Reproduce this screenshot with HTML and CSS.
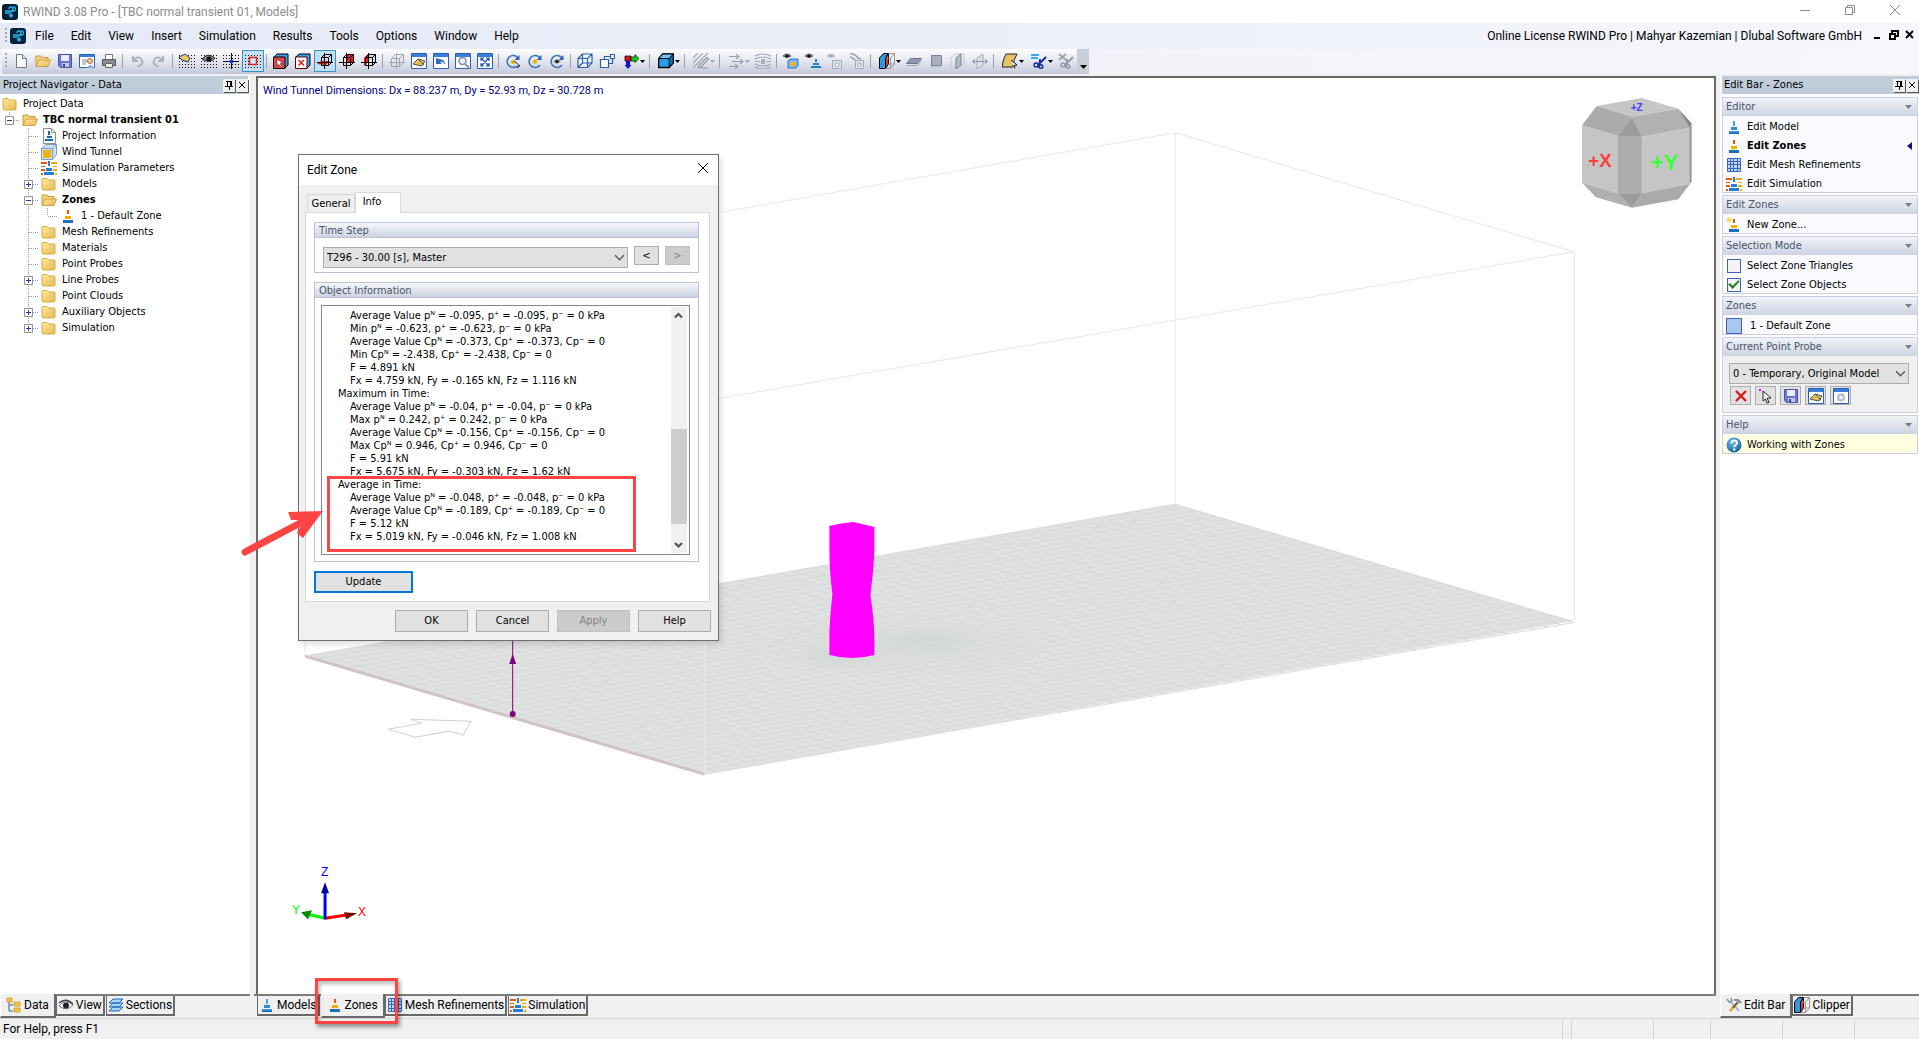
FILE: index.html
```html
<!DOCTYPE html>
<html lang="en">
<head>
<meta charset="utf-8">
<title>RWIND 3.08 Pro - [TBC normal transient 01, Models]</title>
<link rel="stylesheet" href="styles.css">
</head>
<body>
<svg class="defs" aria-hidden="true">
  <defs>
    <linearGradient id="g-folder" x1="0" y1="0" x2="1" y2="1"><stop offset="0" stop-color="#fde9a8"/><stop offset="1" stop-color="#e6b84c"/></linearGradient>
    <linearGradient id="g-blue" x1="0" y1="0" x2="0" y2="1"><stop offset="0" stop-color="#4aa3e6"/><stop offset="1" stop-color="#0f5fa8"/></linearGradient>
    <radialGradient id="g-help" cx=".4" cy=".3" r=".8"><stop offset="0" stop-color="#6cc0ee"/><stop offset="1" stop-color="#0a5b93"/></radialGradient>
    <radialGradient id="g-dense"><stop offset="0" stop-color="#ccd1d2"/><stop offset="1" stop-color="#ccd1d2" stop-opacity="0"/></radialGradient>
  </defs>
  <symbol id="i-logo" viewBox="0 0 16 16"><rect width="16" height="16" rx="3" fill="#06213a"/><path d="M3 7h6a2 2 0 1 0-2-2M3 9h5M11 3a2 2 0 1 1 1 4H9v2" fill="none" stroke="#22b5e8" stroke-width="1.3"/><circle cx="9" cy="11.500" r="2" fill="#22b5e8"/></symbol>
  <symbol id="i-folder" viewBox="0 0 16 16"><path d="M1 3.500q0-1 1-1h4l1.500 1.500H13q1 0 1 1V13q0 1-1 1H2q-1 0-1-1z" fill="url(#g-folder)" stroke="#d9ab45"/></symbol>
  <symbol id="i-open" viewBox="0 0 16 16"><path d="M1 13V3h5l1 1.500h6V7" fill="#f5d27c" stroke="#c99a35"/><path d="M1 13.500L4 7h11.500L13 13.500z" fill="url(#g-folder)" stroke="#d0a040"/></symbol>
  <symbol id="i-model" viewBox="0 0 16 16"><path d="M7 2h2v5H7z" fill="#4aa3e6"/><path d="M5 8h6v3H5z" fill="#2f8bd6"/><path d="M3 12h10v3H3z" fill="url(#g-blue)"/></symbol>
  <symbol id="i-zone" viewBox="0 0 16 16"><path d="M7 2h2v4H7z" fill="#e8590c"/><path d="M5 8h6v3H5z" fill="#f0b000"/><path d="M3 12h10v3H3z" fill="#1c6fb8"/></symbol>
  <symbol id="i-newzone" viewBox="0 0 16 16"><path d="M7 2h2v4H7z" fill="#e8590c"/><path d="M5 8h6v3H5z" fill="#f0b000"/><path d="M3 12h10v3H3z" fill="#1c6fb8"/><path d="M3 0v6M0 3h6M1 1l4 4M5 1L1 5" stroke="#f6d23c"/></symbol>
  <symbol id="i-param" viewBox="0 0 16 16"><path d="M0 2h6v2H0zM0 6h4v1H0zM0 9h4v2H0zM0 13h2v2H0z" fill="#e8590c"/><path d="M10 2h6v2h-6zM12 6h4v1h-4zM12 9h4v2h-4zM14 13h2v2h-2z" fill="#f0a800"/><path d="M7 1h2v5H7zM5 8h6v3H5zM3 12h10v3H3z" fill="#2380d0"/></symbol>
  <symbol id="i-info" viewBox="0 0 16 16"><path d="M2.500.5h8l4 4v11h-12z" fill="#fff" stroke="#8a8f96"/><path d="M10.500.5v4h4" fill="none" stroke="#8a8f96"/><path d="M7 3h2v4H7zM6 8h5v2H6zM4 11h8v2H4z" fill="#1668b0"/></symbol>
  <symbol id="i-tunnel" viewBox="0 0 16 16"><path d="M.5 4.500l4-4h11v10l-4 5H.5z" fill="#cfe0f2" stroke="#7e9cc0"/><path d="M.5 4.500h11v11M11.500 4.500l4-4" fill="none" stroke="#7e9cc0"/><path d="M2 6h8v8H2z" fill="#e9b514"/></symbol>
  <symbol id="i-mesh" viewBox="0 0 16 16"><path d="M1.500 1.500h13v13h-13z" fill="#c4d6f4"/><path d="M1.500 1.500h13v13h-13zM4.500 2v12M7.500 2v12M11.500 2v12M2 4.500h12M2 7.500h12M2 11.500h12" fill="none" stroke="#3566c0"/></symbol>
  <symbol id="i-data" viewBox="0 0 16 16"><path d="M3 5v9h4M3 8h4" fill="none" stroke="#2a66b0"/><path d="M1 1h5v4H1zM8 5h6v4H8zM8 11h6v4H8z" fill="#efc24a" stroke="#d9a830"/></symbol>
  <symbol id="i-eye" viewBox="0 0 16 16"><path d="M1 9q6-8 14-1-6 7-14 1z" fill="#fff" stroke="#777"/><path d="M1 6q7-6 14 1" fill="none" stroke="#444" stroke-width="1.500"/><circle cx="8" cy="8.500" r="3" fill="#222"/></symbol>
  <symbol id="i-sections" viewBox="0 0 16 16"><path d="M1 14l4-4h10l-4 4zM1 10l4-4h10l-4 4zM1 6l4-4h10l-4 4z" fill="#a8d2f6" stroke="#1f68b8"/></symbol>
  <symbol id="i-tools" viewBox="0 0 16 16"><path d="M4 4l9 10" stroke="#a8b8c8" stroke-width="2"/><path d="M1 2l2 3 3-1-1-3" fill="none" stroke="#8498ac" stroke-width="1.500"/><path d="M12 5l-8 9" stroke="#8a5a20" stroke-width="2"/><path d="M4 14l3-3" stroke="#f0b040" stroke-width="2"/><path d="M8 3h4l3 3" stroke="#7f90a0" stroke-width="2" fill="none"/></symbol>
  <symbol id="i-clip" viewBox="0 0 16 16"><path d="M.5 5l4-4.500h5L6.500 5v10.500h-6z" fill="#2a9be0" stroke="#000"/><path d="M6.500 5l3-4.500V11l-3 4.500z" fill="#f03030" stroke="#000"/><path d="M9.500.5h6V11l-4 4.500h-5M15.500.5l-4 4.500v10.500M11.500 5h-4M9.500 11h6" fill="none" stroke="#999"/></symbol>
  <symbol id="i-help" viewBox="0 0 16 16"><circle cx="8" cy="8" r="7.500" fill="url(#g-help)"/><path d="M5.500 6.500q0-3 2.700-3T11 6q0 1.500-1.500 2.200Q8.300 9 8.300 10.200" fill="none" stroke="#fff" stroke-width="1.800"/><circle cx="8.300" cy="12.500" r="1.200" fill="#fff"/></symbol>
  <symbol id="i-pin" viewBox="0 0 12 12"><path d="M3 2.500h6M4.500 2v5M7.500 2v5M8.500 2v5M2 7.500h8M6.500 8v3" stroke="#000" fill="none"/></symbol>
  <symbol id="i-x" viewBox="0 0 12 12"><path d="M3 3l6 6M9 3L3 9" stroke="#000" fill="none"/></symbol>
  <symbol id="i-tri" viewBox="0 0 7 4"><path d="M0 0h7L3.500 4z" fill="currentColor"/></symbol>
  <symbol id="i-chev" viewBox="0 0 10 10"><path d="M1 3l4 4 4-4" fill="none" stroke="#555" stroke-width="1.200"/></symbol>

  <symbol id="i-new" viewBox="0 0 16 16"><path d="M3.500 1.500h6l4 4v9h-10z" fill="#fff" stroke="#6b7a90"/><path d="M9.500 1.500v4h4" fill="#dde6f2" stroke="#6b7a90"/></symbol>
  <symbol id="i-save" viewBox="0 0 16 16"><path d="M1.500 1.500h13v13h-11l-2-2z" fill="#6a76d4" stroke="#4a54b0"/><path d="M4 2h8v6H4z" fill="#e8ecf8"/><path d="M5 10h7v4H5z" fill="#c0c8e0"/><path d="M6 11h2v3H6z" fill="#3a468c"/></symbol>
  <symbol id="i-report" viewBox="0 0 16 16"><path d="M.5 1.500h15v13H.5z" fill="#fff" stroke="#2a66b0"/><path d="M1 2h14v2H1z" fill="#3b7dd8"/><path d="M3 7h5M3 9h5M3 11h4" stroke="#88a"/><circle cx="11" cy="8" r="2.500" fill="#f0c8a0" stroke="#a06830"/><path d="M8 15q3-6 7 0z" fill="#8aa8d8"/></symbol>
  <symbol id="i-print" viewBox="0 0 16 16"><path d="M4.500 1.500h7v5h-7z" fill="#fff" stroke="#777"/><path d="M1.500 6.500h13v6h-13z" fill="#8a8a90" stroke="#55555c"/><path d="M4.500 10.500h7v4h-7z" fill="#eee" stroke="#666"/></symbol>
  <symbol id="i-undo" viewBox="0 0 16 16"><path d="M4 3v5h5M4.500 7.500q5-6 8-1t-4 7" fill="none" stroke="#adb3bf" stroke-width="2.200"/></symbol>
  <symbol id="i-redo" viewBox="0 0 16 16"><path d="M12 3v5H7M11.500 7.500q-5-6-8-1t4 7" fill="none" stroke="#adb3bf" stroke-width="2"/></symbol>
  <symbol id="i-dots" viewBox="0 0 16 16"><path d="M0 2.500h16M0 5.500h16M0 8.500h16M0 11.500h16M0 14.500h16" stroke="#111" stroke-dasharray="1 2"/></symbol>
  <symbol id="i-dotsedit" viewBox="0 0 16 16"><use href="#i-dots"/><path d="M0 4l6-3 5 4-2 4-6-2z" fill="#e8c860" stroke="#1c3c90"/></symbol>
  <symbol id="i-dotseye" viewBox="0 0 16 16"><use href="#i-dots"/><path d="M1 6q6-7 13-1-5 6-13 1z" fill="#889" stroke="#222"/><circle cx="8" cy="6" r="2.500" fill="#111"/></symbol>
  <symbol id="i-dotscross" viewBox="0 0 16 16"><use href="#i-dots"/><path d="M8.500 0v16M0 8.500h16" stroke="#000"/><circle cx="8.500" cy="8.500" r="2" fill="#1030e0"/></symbol>
  <symbol id="i-dotsbox" viewBox="0 0 16 16"><use href="#i-dots"/><path d="M4.500 4.500h7v7h-7z" fill="#d4ecf8" stroke="#e02020" stroke-width="1.500"/></symbol>
  <symbol id="i-boxsel" viewBox="0 0 16 16"><path d="M1 4l3-3h11v11l-3 3" fill="#38a0e8" stroke="#000"/><path d="M.5 4h11.500v11.500H.5z" fill="#f04040" stroke="#000"/><path d="M4 6l6 4-3 .5 2 3-1 1-2-3-2 1.500z" fill="#fff" stroke="#333" stroke-width=".7"/></symbol>
  <symbol id="i-boxx" viewBox="0 0 16 16"><path d="M1 4l3-3h11v11l-3 3" fill="#38a0e8" stroke="#000"/><path d="M.5 4h11.500v11.500H.5z" fill="#fff" stroke="#600"/><path d="M3.500 7l5.500 5.500M9 7l-5.500 5.500" stroke="#e02020" stroke-width="1.500"/></symbol>
  <symbol id="i-axis1" viewBox="0 0 16 16"><path d="M4 5h8v7H4z" fill="#bfe0f8"/><path d="M0 11l4-3h9l-4 4z" fill="#f01818"/><path d="M4.500 4.500l3-3h7v8l-3 3M4.500 4.500h7v8h-7zM11.500 4.500l3-3M0 9.500h16M7.500 0v16" fill="none" stroke="#000"/></symbol>
  <symbol id="i-axis2" viewBox="0 0 16 16"><path d="M7 1h7v8H7z" fill="#f01818"/><path d="M4.500 4.500l3-3h7v8l-3 3M4.500 4.500h7v8h-7zM11.500 4.500l3-3M0 9.500h16M7.500 0v16" fill="none" stroke="#000"/></symbol>
  <symbol id="i-axis3" viewBox="0 0 16 16"><path d="M7 2h7v8H7z" fill="#bfe0f8"/><path d="M3 5l4-4v8l-4 4z" fill="#f01818"/><path d="M4.500 4.500l3-3h7v8l-3 3M4.500 4.500h7v8h-7zM11.500 4.500l3-3M0 9.500h16M7.500 0v16" fill="none" stroke="#000"/></symbol>
  <symbol id="i-axisg" viewBox="0 0 16 16"><path d="M2.500 5.500l4-4h8v8l-4 4M2.500 5.500h8v8h-8zM10.500 5.500l4-4M0 9.500h16M7.500 0v16" fill="none" stroke="#a0a6b4"/></symbol>
  <symbol id="i-win" viewBox="0 0 16 16"><path d="M.5.5h15v15H.5z" fill="#fff" stroke="#2a5fb8"/><path d="M1 1h14v3H1z" fill="#3b7dd8"/></symbol>
  <symbol id="i-winedit" viewBox="0 0 16 16"><use href="#i-win"/><path d="M2 11l5-5 7 2-3 5-5-1z" fill="#e4c04c" stroke="#555"/><path d="M7 6l6 6" stroke="#2a5fb8"/></symbol>
  <symbol id="i-winback" viewBox="0 0 16 16"><use href="#i-win"/><path d="M3 5v6h6L7 9q3-1 5 3 0-6-6-6z" fill="#2a6fd0"/></symbol>
  <symbol id="i-winzoom" viewBox="0 0 16 16"><use href="#i-win"/><circle cx="7.500" cy="8" r="3.500" fill="#eef" stroke="#8090a8" stroke-width="1.500"/><path d="M10 11l4 3.500" stroke="#8090a8" stroke-width="2"/></symbol>
  <symbol id="i-winfit" viewBox="0 0 16 16"><use href="#i-win"/><path d="M4 5l8 8M12 5l-8 8M4 8V5h3M9 5h3v3M12 10v3H9M7 13H4v-3" fill="none" stroke="#1a55b0" stroke-width="1.200"/></symbol>
  <symbol id="i-winset" viewBox="0 0 16 16"><use href="#i-win"/><circle cx="8" cy="9.500" r="3" fill="#eef" stroke="#b0b8cc" stroke-width="2"/></symbol>
  <symbol id="i-rot" viewBox="0 0 16 16"><path d="M13 5a6 6 0 1 0 0 7" fill="none" stroke="#3a76c0" stroke-width="1.600"/><path d="M14.500 2v5h-5z" fill="#2a66b8"/></symbol>
  <symbol id="i-rot1" viewBox="0 0 16 16"><use href="#i-rot"/><circle cx="8" cy="9" r="2" fill="#f0b000"/><path d="M9 8l6 5-3 .3 1 2" fill="#fff" stroke="#222"/></symbol>
  <symbol id="i-rot2" viewBox="0 0 16 16"><use href="#i-rot"/><circle cx="8" cy="8.500" r="2.200" fill="#f0b000"/></symbol>
  <symbol id="i-rot3" viewBox="0 0 16 16"><use href="#i-rot"/><path d="M4 8.500q4-4 8 0-4 4-8 0" fill="#999"/><circle cx="8" cy="8.500" r="1.800" fill="#222"/></symbol>
  <symbol id="i-wire" viewBox="0 0 16 16"><path d="M1 5.500l4.500-4.500H15v9l-4.500 4.500H1zM1 5.500h9.500v9M10.500 5.500L15 1M5.500 1v9H15M5.500 10L1 14.500" fill="#fff" fill-opacity=".6" stroke="#2a5fb0" stroke-width="1.200"/></symbol>
  <symbol id="i-wire2" viewBox="0 0 16 16"><path d="M1.500 6.500h8v8h-8zM11.500 1.500h4v4h-4z" fill="#fff" stroke="#2a5fb0" stroke-width="1.200"/><path d="M5.500 6V3.500h6M9.500 10.500h4V6" fill="none" stroke="#2a5fb0" stroke-width="1.200"/></symbol>
  <symbol id="i-rgb" viewBox="0 0 16 16"><path d="M2 3h6v5H2z" fill="#e01010" stroke="#000" stroke-width=".7"/><path d="M8 4h4V1.500l4 4-4 4V8H8z" fill="#10d010" stroke="#000" stroke-width=".7"/><path d="M3 8h4v4h1.500L5 16l-3.500-4H3z" fill="#1010d8"/></symbol>
  <symbol id="i-cube" viewBox="0 0 16 16"><path d="M.7 5.500l4-4.500h10.500v9l-4 4.500H.7z" fill="#2c9be8" stroke="#000" stroke-width="1.300"/><path d="M11.200 5.500L15.200 1v9l-4 4.500z" fill="#1470b8" stroke="#000"/><path d="M.7 5.500l4-4.500h10.500l-4 4.500z" fill="#74c2f4" stroke="#000"/></symbol>
  <symbol id="i-hatch" viewBox="0 0 16 16"><path d="M0 5l5-5M0 10L10 0M0 15L15 0M8 15h7" stroke="#a4aab6" stroke-width="1.300"/><path d="M6 12l8-8 2 2-8 8-3 1z" fill="#c4c8d0" stroke="#8a90a0"/></symbol>
  <symbol id="i-flow" viewBox="0 0 16 16"><path d="M1 3.500h9M4 8.500h10M1 13.500h8M8 1l3 2.500L8 6M12 6l3 2.500-3 2.500M7 11l3 2.500L7 16" fill="none" stroke="#9aa2b2" stroke-width="1.200"/></symbol>
  <symbol id="i-stream" viewBox="0 0 16 16"><path d="M0 3q8-4 16 0M0 6q8-4 16 0M0 11q8 4 16 0M0 14q8 4 16 0M0 8.500h5M11 8.500h5" fill="none" stroke="#a4aab8" stroke-width="1.200"/><path d="M6 6h4v5H6z" fill="#a8aebc"/></symbol>
  <symbol id="i-see" viewBox="0 0 16 16"><path d="M0 3q4-4 8 0-4 3-8 0" fill="#889" stroke="#444" stroke-width=".8"/><circle cx="4" cy="3" r="1.600" fill="#111"/></symbol>
  <symbol id="i-seebox" viewBox="0 0 16 16"><use href="#i-see"/><path d="M5 8l2-2h8v7l-2 2H5z" fill="#7fb8e8" stroke="#2a77c0"/><path d="M7 9h5v4H7z" fill="#f0b820"/></symbol>
  <symbol id="i-seemodel" viewBox="0 0 16 16"><use href="#i-see"/><path d="M10 6h2v3h-2zM8 10h6v2H8zM6 13h10v2H6z" fill="#1f82d0"/></symbol>
  <symbol id="i-seeg" viewBox="0 0 16 16"><path d="M0 3q4-4 8 0-4 3-8 0" fill="#aab" /><path d="M5.500 7.500h9v8h-9z" fill="#e4e6ee" stroke="#a4aab8"/><path d="M8 10h4v3H8z" fill="#fff" stroke="#a4aab8"/></symbol>
  <symbol id="i-handg" viewBox="0 0 16 16"><path d="M1 1q4-1 8 4l3 1M1 4q2 0 6 4" fill="none" stroke="#9aa2b2" stroke-width="1.500"/><path d="M6.500 7.500h8v8h-8z" fill="#e4e6ee" stroke="#a4aab8"/><path d="M9 10h3v3H9z" fill="#fff" stroke="#a4aab8"/></symbol>
  <symbol id="i-pl1" viewBox="0 0 16 16"><path d="M.5 10.500l4-5h11l-4 5z" fill="#8f97ac" stroke="#70788c"/><path d="M.5 12.500h11l4-5" fill="none" stroke="#aab"/></symbol>
  <symbol id="i-pl2" viewBox="0 0 16 16"><path d="M3.500 2.500h10v10h-10z" fill="#a8afc0" stroke="#7a8296"/><path d="M2 14h11" stroke="#b4bac8"/></symbol>
  <symbol id="i-pl3" viewBox="0 0 16 16"><path d="M1 5l4-4h9v9l-4 4H1z" fill="none" stroke="#c4c8d4"/><path d="M6 5l5-4v11l-5 4z" fill="#b4bac8" stroke="#7a8296"/></symbol>
  <symbol id="i-pl4" viewBox="0 0 16 16"><path d="M5 5l6-4v11l-6 4z" fill="#dde0e8" stroke="#a4aab8"/><path d="M0 8.500h16M3 6L.5 8.500 3 11M13 6l2.500 2.500L13 11" fill="none" stroke="#8a92a4"/></symbol>
  <symbol id="i-surf" viewBox="0 0 16 16"><path d="M4 1h11q-4 6-4 13H0Q1 6 4 1z" fill="#e8c268" stroke="#222"/><path d="M9 7l6 5-3 .4 1 3" fill="#fff" stroke="#111"/></symbol>
  <symbol id="i-cut" viewBox="0 0 16 16"><path d="M0 2h8M0 5h7" stroke="#38a8f0" stroke-width="2"/><path d="M15 4l-8 8M9 6l-1 9" stroke="#1428a0" stroke-width="1.800"/><circle cx="5" cy="12" r="2" fill="none" stroke="#1428a0" stroke-width="1.400"/><circle cx="10" cy="13.500" r="1.800" fill="none" stroke="#1428a0" stroke-width="1.400"/></symbol>
  <symbol id="i-cutg" viewBox="0 0 16 16"><path d="M1 1l7 6M8 1L1 7" stroke="#a0a6b4" stroke-width="2.200"/><path d="M15 4l-8 8M9 6l-1 9" stroke="#9298a8" stroke-width="1.800"/><circle cx="5" cy="12" r="2" fill="none" stroke="#9298a8" stroke-width="1.400"/><circle cx="10" cy="13.500" r="1.800" fill="none" stroke="#9298a8" stroke-width="1.400"/></symbol>
  <symbol id="i-del" viewBox="0 0 16 16"><path d="M3 3l10 10M13 3L3 13" stroke="#d81818" stroke-width="2.400"/></symbol>
  <symbol id="i-pick" viewBox="0 0 16 16"><path d="M1 1h2v2H1z" fill="#f0f"/><path d="M5 3l8 7-4 .3 2 4-2 .7-1.500-4L5 13z" fill="#fff" stroke="#222"/></symbol>

  <symbol id="t-line" viewBox="0 0 19 16"><path d="M9.500 0v16" stroke="#999" stroke-dasharray="1 1"/></symbol>
  <symbol id="t-tee" viewBox="0 0 19 16"><path d="M9.500 0v16M10 8.500h9" stroke="#999" stroke-dasharray="1 1"/></symbol>
  <symbol id="t-end" viewBox="0 0 19 16"><path d="M9.500 0v8M10 8.500h9" stroke="#999" stroke-dasharray="1 1"/></symbol>
  <symbol id="t-box" viewBox="0 0 19 16"><path d="M5.500 4.500h8v8h-8z" fill="#fff" stroke="#919191"/><path d="M7 8.500h5" stroke="#223a90"/></symbol>
  <symbol id="t-minus" viewBox="0 0 19 16"><use href="#t-tee"/><use href="#t-box"/></symbol>
  <symbol id="t-plus" viewBox="0 0 19 16"><use href="#t-tee"/><use href="#t-box"/><path d="M9.500 6v5" stroke="#223a90"/></symbol>
  <symbol id="t-plusend" viewBox="0 0 19 16"><use href="#t-end"/><use href="#t-box"/><path d="M9.500 6v5" stroke="#223a90"/></symbol>
  <symbol id="t-root" viewBox="0 0 19 16"><path d="M9.500 0v5M14 8.500h5" stroke="#999" stroke-dasharray="1 1"/><use href="#t-box"/></symbol>
</svg>

<header class="titlebar">
  <svg class="ic"><use href="#i-logo"/></svg>
  <span class="title">RWIND 3.08 Pro - [TBC normal transient 01, Models]</span>
  <button aria-label="Minimize"><svg viewBox="0 0 12 12"><path d="M1 6.500h10"/></svg></button>
  <button aria-label="Restore"><svg viewBox="0 0 12 12"><path d="M1.500 3.500h7v7h-7zM3.500 3V1.500h7v7H9"/></svg></button>
  <button aria-label="Close"><svg viewBox="0 0 12 12"><path d="M1 1l10 10M11 1L1 11"/></svg></button>
</header>

<nav class="menubar">
  <i class="grip"></i>
  <svg class="ic"><use href="#i-logo"/></svg>
  <button>File</button><button>Edit</button><button>View</button><button>Insert</button><button>Simulation</button><button>Results</button><button>Tools</button><button>Options</button><button>Window</button><button>Help</button>
  <span class="license">Online License RWIND Pro | Mahyar Kazemian | Dlubal Software GmbH</span>
  <button class="mdi" aria-label="Minimize document"><svg viewBox="0 0 10 10"><path d="M1 8h6"/></svg></button>
  <button class="mdi" aria-label="Restore document"><svg viewBox="0 0 10 10"><path d="M1 4h5v5H1zM3 3V1h6v5H7"/></svg></button>
  <button class="mdi" aria-label="Close document"><svg viewBox="0 0 10 10"><path d="M1 1l7 7M8 1L1 8"/></svg></button>
</nav>

<div class="toolrow">
 <div class="toolbar" role="toolbar">
  <i class="grip"></i>
  <button aria-label="New"><svg class="ic"><use href="#i-new"/></svg></button>
  <button aria-label="Open"><svg class="ic"><use href="#i-open"/></svg></button>
  <button aria-label="Save"><svg class="ic"><use href="#i-save"/></svg></button>
  <button aria-label="Report"><svg class="ic"><use href="#i-report"/></svg></button>
  <button aria-label="Print"><svg class="ic"><use href="#i-print"/></svg></button>
  <i class="sep"></i>
  <button aria-label="Undo"><svg class="ic"><use href="#i-undo"/></svg></button>
  <button aria-label="Redo"><svg class="ic"><use href="#i-redo"/></svg></button>
  <i class="sep"></i>
  <button aria-label="Edit grid"><svg class="ic"><use href="#i-dotsedit"/></svg></button>
  <button aria-label="Show grid"><svg class="ic"><use href="#i-dotseye"/></svg></button>
  <button aria-label="Grid origin"><svg class="ic"><use href="#i-dotscross"/></svg></button>
  <button class="on" aria-label="Snap"><svg class="ic"><use href="#i-dotsbox"/></svg></button>
  <i class="sep"></i>
  <button aria-label="Select"><svg class="ic"><use href="#i-boxsel"/></svg></button>
  <button aria-label="Deselect"><svg class="ic"><use href="#i-boxx"/></svg></button>
  <button class="on" aria-label="Plane XY"><svg class="ic"><use href="#i-axis1"/></svg></button>
  <button aria-label="Plane XZ"><svg class="ic"><use href="#i-axis2"/></svg></button>
  <button aria-label="Plane YZ"><svg class="ic"><use href="#i-axis3"/></svg></button>
  <i class="sep"></i>
  <button aria-label="Plane free"><svg class="ic"><use href="#i-axisg"/></svg></button>
  <button aria-label="Edit view"><svg class="ic"><use href="#i-winedit"/></svg></button>
  <button aria-label="Previous view"><svg class="ic"><use href="#i-winback"/></svg></button>
  <button aria-label="Zoom window"><svg class="ic"><use href="#i-winzoom"/></svg></button>
  <button aria-label="Zoom all"><svg class="ic"><use href="#i-winfit"/></svg></button>
  <i class="sep"></i>
  <button aria-label="Rotate about point"><svg class="ic"><use href="#i-rot1"/></svg></button>
  <button aria-label="Rotate about centre"><svg class="ic"><use href="#i-rot2"/></svg></button>
  <button aria-label="Rotate view"><svg class="ic"><use href="#i-rot3"/></svg></button>
  <i class="sep"></i>
  <button aria-label="Perspective"><svg class="ic"><use href="#i-wire"/></svg></button>
  <button aria-label="Isometric"><svg class="ic"><use href="#i-wire2"/></svg></button>
  <button class="drop" aria-label="View direction"><svg class="ic"><use href="#i-rgb"/></svg><svg class="tri"><use href="#i-tri"/></svg></button>
  <i class="sep"></i>
  <button class="drop" aria-label="Display mode"><svg class="ic"><use href="#i-cube"/></svg><svg class="tri"><use href="#i-tri"/></svg></button>
  <i class="sep"></i>
  <button class="drop off" aria-label="Hatching"><svg class="ic"><use href="#i-hatch"/></svg><svg class="tri"><use href="#i-tri"/></svg></button>
  <i class="sep"></i>
  <button class="drop off" aria-label="Vectors"><svg class="ic"><use href="#i-flow"/></svg><svg class="tri"><use href="#i-tri"/></svg></button>
  <button aria-label="Streamlines"><svg class="ic"><use href="#i-stream"/></svg></button>
  <i class="sep"></i>
  <button aria-label="Show tunnel"><svg class="ic"><use href="#i-seebox"/></svg></button>
  <button aria-label="Show model"><svg class="ic"><use href="#i-seemodel"/></svg></button>
  <button aria-label="Show zones"><svg class="ic"><use href="#i-seeg"/></svg></button>
  <button aria-label="Move"><svg class="ic"><use href="#i-handg"/></svg></button>
  <i class="sep"></i>
  <button class="drop" aria-label="Clipper"><svg class="ic"><use href="#i-clip"/></svg><svg class="tri"><use href="#i-tri"/></svg></button>
  <button aria-label="Clip Z"><svg class="ic"><use href="#i-pl1"/></svg></button>
  <button aria-label="Clip Y"><svg class="ic"><use href="#i-pl2"/></svg></button>
  <button aria-label="Clip X"><svg class="ic"><use href="#i-pl3"/></svg></button>
  <button aria-label="Flip clip"><svg class="ic"><use href="#i-pl4"/></svg></button>
  <i class="sep"></i>
  <button class="drop" aria-label="Slice"><svg class="ic"><use href="#i-surf"/></svg><svg class="tri"><use href="#i-tri"/></svg></button>
  <button class="drop" aria-label="Section"><svg class="ic"><use href="#i-cut"/></svg><svg class="tri"><use href="#i-tri"/></svg></button>
  <button aria-label="Delete section"><svg class="ic"><use href="#i-cutg"/></svg></button>
 </div>
 <button class="more" aria-label="More buttons"><svg class="tri"><use href="#i-tri"/></svg></button>
</div>

<main class="work">
 <section class="pane">
  <h2 class="cap">Project Navigator - Data<span><button aria-label="Pin"><svg><use href="#i-pin"/></svg></button><button aria-label="Close"><svg><use href="#i-x"/></svg></button></span></h2>
  <ul class="tree">
   <li class="root"><svg class="ic"><use href="#i-folder"/></svg>Project Data</li>
   <li><svg class="tl"><use href="#t-root"/></svg><svg class="ic"><use href="#i-open"/></svg><b>TBC normal transient 01</b></li>
   <li><i></i><svg class="tl"><use href="#t-tee"/></svg><svg class="ic"><use href="#i-info"/></svg>Project Information</li>
   <li><i></i><svg class="tl"><use href="#t-tee"/></svg><svg class="ic"><use href="#i-tunnel"/></svg>Wind Tunnel</li>
   <li><i></i><svg class="tl"><use href="#t-tee"/></svg><svg class="ic"><use href="#i-param"/></svg>Simulation Parameters</li>
   <li><i></i><svg class="tl"><use href="#t-plus"/></svg><svg class="ic"><use href="#i-folder"/></svg>Models</li>
   <li><i></i><svg class="tl"><use href="#t-minus"/></svg><svg class="ic"><use href="#i-open"/></svg><b>Zones</b></li>
   <li><i></i><svg class="tl"><use href="#t-line"/></svg><svg class="tl"><use href="#t-end"/></svg><svg class="ic"><use href="#i-zone"/></svg>1 - Default Zone</li>
   <li><i></i><svg class="tl"><use href="#t-tee"/></svg><svg class="ic"><use href="#i-folder"/></svg>Mesh Refinements</li>
   <li><i></i><svg class="tl"><use href="#t-tee"/></svg><svg class="ic"><use href="#i-folder"/></svg>Materials</li>
   <li><i></i><svg class="tl"><use href="#t-tee"/></svg><svg class="ic"><use href="#i-folder"/></svg>Point Probes</li>
   <li><i></i><svg class="tl"><use href="#t-plus"/></svg><svg class="ic"><use href="#i-folder"/></svg>Line Probes</li>
   <li><i></i><svg class="tl"><use href="#t-tee"/></svg><svg class="ic"><use href="#i-folder"/></svg>Point Clouds</li>
   <li><i></i><svg class="tl"><use href="#t-plus"/></svg><svg class="ic"><use href="#i-folder"/></svg>Auxiliary Objects</li>
   <li><i></i><svg class="tl"><use href="#t-plusend"/></svg><svg class="ic"><use href="#i-folder"/></svg>Simulation</li>
  </ul>
  <div class="tabs">
   <button class="active"><svg class="ic"><use href="#i-data"/></svg>Data</button>
   <button><svg class="ic"><use href="#i-eye"/></svg>View</button>
   <button><svg class="ic"><use href="#i-sections"/></svg>Sections</button>
  </div>
 </section>

 <section class="center">
  <div class="viewport">
   <p class="dims">Wind Tunnel Dimensions: Dx = 88.237 m, Dy = 52.93 m, Dz = 30.728 m</p>
   <svg class="scene" viewBox="258 78 1455 914">
    <path d="M305 655L1174 503L1573 620L704 773z" fill="#e0e2e1"/>
    <ellipse cx="900" cy="645" rx="190" ry="34" fill="url(#g-dense)" opacity=".3"/>
    <ellipse cx="925" cy="640" rx="60" ry="16" fill="url(#g-dense)" opacity=".8"/>
    <ellipse cx="845" cy="655" rx="50" ry="14" fill="url(#g-dense)" opacity=".7"/>
    <g transform="matrix(13.170 -2.300 10.230 3.030 305 655)" fill="none" stroke="#d8dbda">
     <path vector-effect="non-scaling-stroke" d="M0 0v39m1 0v-39m1 0v39m1 0v-39m1 0v39m1 0v-39m1 0v39m1 0v-39m1 0v39m1 0v-39m1 0v39m1 0v-39m1 0v39m1 0v-39m1 0v39m1 0v-39m1 0v39m1 0v-39m1 0v39m1 0v-39m1 0v39m1 0v-39m1 0v39m1 0v-39m1 0v39m1 0v-39m1 0v39m1 0v-39m1 0v39m1 0v-39m1 0v39m1 0v-39m1 0v39m1 0v-39m1 0v39m1 0v-39m1 0v39m1 0v-39m1 0v39m1 0v-39m1 0v39m1 0v-39m1 0v39m1 0v-39m1 0v39m1 0v-39m1 0v39m1 0v-39m1 0v39m1 0v-39m1 0v39m1 0v-39m1 0v39m1 0v-39m1 0v39m1 0v-39m1 0v39m1 0v-39m1 0v39m1 0v-39m1 0v39m1 0v-39m1 0v39m1 0v-39m1 0v39m1 0v-39m1 0v39"/>
     <path vector-effect="non-scaling-stroke" d="M0 0h66m0 1h-66m0 1h66m0 1h-66m0 1h66m0 1h-66m0 1h66m0 1h-66m0 1h66m0 1h-66m0 1h66m0 1h-66m0 1h66m0 1h-66m0 1h66m0 1h-66m0 1h66m0 1h-66m0 1h66m0 1h-66m0 1h66m0 1h-66m0 1h66m0 1h-66m0 1h66m0 1h-66m0 1h66m0 1h-66m0 1h66m0 1h-66m0 1h66m0 1h-66m0 1h66m0 1h-66m0 1h66m0 1h-66m0 1h66m0 1h-66m0 1h66m0 1h-66"/>
    </g>
    <path d="M305 284L1175 132L1573 251L704 400zM305 284V655M1174.500 132V503M1573.500 251V620" fill="none" stroke="#e8e8e8"/>
    <path d="M704.500 400V773" stroke="#f3eaec"/>
    <path d="M305 655L704 773" stroke="#cfc3c3" stroke-width="3"/>
    <path d="M388 728L422 722L410 718L471 720L463 734L449 730L415 736z" fill="none" stroke="#d6cccc"/>
    <path d="M512.500 600V713" stroke="#800080"/><path d="M512.500 653L516 663H509z" fill="#800080"/><circle cx="512.500" cy="713" r="3" fill="#800080"/>
    <path d="M829 525Q840 522 853 521L874 526V550Q873 572 870 594Q874 620 874 640V654Q852 660 829 654V630Q830 610 832 593Q829 570 829 550z" fill="#f0f"/>
    <path d="M325 917L345 914" stroke="red" stroke-width="3"/><path d="M344 911L357 912L346 918z" fill="#800000"/>
    <path d="M325 917L308 913" stroke="#0f0" stroke-width="3"/><path d="M301 911L312 909L308 918z" fill="#008a00"/>
    <path d="M325 918V888" stroke="#00f" stroke-width="3"/><path d="M325 881L329 892H321z" fill="#0000a0"/>
    <g class="axis"><text x="321" y="875" fill="#00f">Z</text><text x="292" y="913" fill="#0e0">Y</text><text x="358" y="915" fill="red">X</text></g>
   </svg>
   <svg class="navcube" viewBox="360 288 342 342">
    <path d="M410 318L545 294L655 326L516 350z" fill="#c6c6c6"/><path d="M410 318L516 350L474 408L366 376z" fill="#ababab"/><path d="M516 350L655 326L688 384L547 410z" fill="#b1b1b1"/><path d="M516 350L547 410L474 408z" fill="#9c9c9c"/>
    <path d="M366 376L474 408V580L366 548zM547 410L688 384V552L547 580z" fill="#c5c5c5"/><path d="M474 408H547V580H474z" fill="#adadad"/>
    <path d="M655 326L695 370L688 384z" fill="#888"/><path d="M688 384L695 370V545L688 552z" fill="#999"/>
    <path d="M366 548L474 580L516 623L408 592z" fill="#b0b0b0"/><path d="M474 580H547L516 623z" fill="#9b9b9b"/><path d="M547 580L688 552L695 545L655 598L516 623z" fill="#aaa"/>
    <text x="385" y="502" font-size="56" fill="#ff3c3c">+X</text><text x="572" y="510" font-size="66" fill="#3cff3c">+Y</text><text x="512" y="332" font-size="30" fill="#4040ff">+Z</text>
   </svg>

   <form class="dialog" aria-label="Edit Zone">
    <div class="dtitle">Edit Zone<button type="button" aria-label="Close"><svg viewBox="0 0 12 12"><path d="M1 1l10 10M11 1L1 11"/></svg></button></div>
    <div class="dtabs"><button type="button">General</button><button type="button" class="cur">Info</button></div>
    <div class="page">
     <fieldset class="group step">
      <label class="gh" for="step">Time Step</label>
      <div class="steprow">
       <span class="sel"><select id="step"><option>T296 - 30.00 [s], Master</option></select><svg><use href="#i-chev"/></svg></span>
       <button type="button">&lt;</button><button type="button" disabled>&gt;</button>
      </div>
     </fieldset>
     <fieldset class="group">
      <div class="gh">Object Information</div>
      <div class="info">
       <div class="lines">
        <p>Average Value pᴺ = -0.095, p⁺ = -0.095, p⁻ = 0 kPa</p>
        <p>Min pᴺ = -0.623, p⁺ = -0.623, p⁻ = 0 kPa</p>
        <p>Average Value Cpᴺ = -0.373, Cp⁺ = -0.373, Cp⁻ = 0</p>
        <p>Min Cpᴺ = -2.438, Cp⁺ = -2.438, Cp⁻ = 0</p>
        <p>F = 4.891 kN</p>
        <p>Fx = 4.759 kN, Fy = -0.165 kN, Fz = 1.116 kN</p>
        <h4>Maximum in Time:</h4>
        <p>Average Value pᴺ = -0.04, p⁺ = -0.04, p⁻ = 0 kPa</p>
        <p>Max pᴺ = 0.242, p⁺ = 0.242, p⁻ = 0 kPa</p>
        <p>Average Value Cpᴺ = -0.156, Cp⁺ = -0.156, Cp⁻ = 0</p>
        <p>Max Cpᴺ = 0.946, Cp⁺ = 0.946, Cp⁻ = 0</p>
        <p>F = 5.91 kN</p>
        <p>Fx = 5.675 kN, Fy = -0.303 kN, Fz = 1.62 kN</p>
        <h4>Average in Time:</h4>
        <p>Average Value pᴺ = -0.048, p⁺ = -0.048, p⁻ = 0 kPa</p>
        <p>Average Value Cpᴺ = -0.189, Cp⁺ = -0.189, Cp⁻ = 0</p>
        <p>F = 5.12 kN</p>
        <p>Fx = 5.019 kN, Fy = -0.046 kN, Fz = 1.008 kN</p>
       </div>
       <div class="sbar"><svg viewBox="0 0 15 17"><path d="M4 10.500L7.500 7L11 10.500"/></svg><i></i><svg viewBox="0 0 15 17"><path d="M4 7L7.500 10.500L11 7"/></svg></div>
      </div>
     </fieldset>
     <button type="button" class="update">Update</button>
    </div>
    <div class="dbtns"><button type="button">OK</button><button type="button">Cancel</button><button type="button" disabled>Apply</button><button type="button">Help</button></div>
   </form>
  </div>
  <div class="tabs">
   <button><svg class="ic"><use href="#i-model"/></svg>Models</button>
   <button class="active"><svg class="ic"><use href="#i-zone"/></svg>Zones</button>
   <button><svg class="ic"><use href="#i-mesh"/></svg>Mesh Refinements</button>
   <button><svg class="ic"><use href="#i-param"/></svg>Simulation</button>
  </div>
  <svg class="arrow" viewBox="240 500 90 60"><path d="M245 552L306 520" stroke="#ff4444" stroke-width="7" stroke-linecap="round"/><path d="M323 511L288 512L291 520L304 520L297 533L303 538z" fill="#ff4444"/></svg>
  <div class="mark mark-info"></div>
  <div class="mark mark-tab"></div>
 </section>

 <section class="pane right">
  <h2 class="cap">Edit Bar - Zones<span><button aria-label="Pin"><svg><use href="#i-pin"/></svg></button><button aria-label="Close"><svg><use href="#i-x"/></svg></button></span></h2>
  <div class="stack">
   <div class="box"><h3>Editor<svg class="tri"><use href="#i-tri"/></svg></h3>
    <a href="#model"><svg class="ic"><use href="#i-model"/></svg>Edit Model</a>
    <a href="#zones" class="cur"><svg class="ic"><use href="#i-zone"/></svg>Edit Zones<svg class="here" viewBox="0 0 5 8"><path d="M5 0v8L0 4z"/></svg></a>
    <a href="#mesh"><svg class="ic"><use href="#i-mesh"/></svg>Edit Mesh Refinements</a>
    <a href="#sim"><svg class="ic"><use href="#i-param"/></svg>Edit Simulation</a></div>
   <div class="box"><h3>Edit Zones<svg class="tri"><use href="#i-tri"/></svg></h3>
    <a href="#new"><svg class="ic"><use href="#i-newzone"/></svg>New Zone...</a></div>
   <div class="box"><h3>Selection Mode<svg class="tri"><use href="#i-tri"/></svg></h3>
    <label><input type="checkbox">Select Zone Triangles</label>
    <label><input type="checkbox" checked>Select Zone Objects</label></div>
   <div class="box"><h3>Zones<svg class="tri"><use href="#i-tri"/></svg></h3>
    <a href="#zone-1"><i class="swatch"></i>1 - Default Zone</a></div>
   <div class="box probe"><h3>Current Point Probe<svg class="tri"><use href="#i-tri"/></svg></h3>
    <div class="pbody"><span class="sel"><select aria-label="Current Point Probe"><option>0 - Temporary, Original Model</option></select><svg><use href="#i-chev"/></svg></span>
    <div class="pbtns"><button aria-label="Delete"><svg class="ic"><use href="#i-del"/></svg></button><button aria-label="Pick"><svg class="ic"><use href="#i-pick"/></svg></button><button aria-label="Save"><svg class="ic"><use href="#i-save"/></svg></button><button aria-label="Edit"><svg class="ic"><use href="#i-winedit"/></svg></button><button aria-label="Settings"><svg class="ic"><use href="#i-winset"/></svg></button></div></div></div>
   <div class="box help"><h3>Help<svg class="tri"><use href="#i-tri"/></svg></h3>
    <a href="#help"><svg class="ic"><use href="#i-help"/></svg>Working with Zones</a></div>
  </div>
  <div class="tabs">
   <button class="active"><svg class="ic"><use href="#i-tools"/></svg>Edit Bar</button>
   <button><svg class="ic"><use href="#i-clip"/></svg>Clipper</button>
  </div>
 </section>
</main>

<footer class="status"><span class="msg">For Help, press F1</span><i class="s1"></i><i class="s2"></i><i class="s3"></i><i class="s4"></i><i class="s4"></i><i class="s5"></i></footer>
</body>
</html>
```

FILE: styles.css
```css
:root {
  --ui: Roboto, "Open Sans", sans-serif;
  --small: "DejaVu Sans Condensed", "DejaVu Sans", sans-serif;
}
* { box-sizing: border-box; }
body {
  margin: 0;
  height: 100vh;
  display: flex;
  flex-direction: column;
  overflow: hidden;
  background: #f0f0f0;
  color: #000;
  font: 11px/16px var(--small);
  white-space: nowrap;
}
button, select, input { font: inherit; color: inherit; margin: 0; }
button { padding: 0; border: 0; background: none; }
h2, h3, h4, p, ul { margin: 0; padding: 0; font: inherit; list-style: none; }
.defs { position: absolute; width: 0; height: 0; }
.ic { width: 16px; height: 16px; flex: none; }
.tri { width: 7px; height: 4px; flex: none; }

.titlebar, .menubar { display: flex; align-items: center; font: 12px/16px var(--ui); }
.titlebar { height: 23px; padding: 0 4px 0 2px; gap: 5px; background: #fff; color: #8c8c8c; }
.title { flex: 1; }
.titlebar button { width: 40px; height: 20px; }
.titlebar svg:not(.ic) { width: 12px; height: 12px; fill: none; stroke: #8a8a8a; }
.menubar { height: 26px; padding: 0 1px 0 5px; background: linear-gradient(90deg, #e5eaf6, #eceffa 50%, #f6f7fa); }
.menubar .ic { margin: 0 1px 0 3px; }
.menubar button { padding: 0 9px 0 8px; }
.license { flex: 1; text-align: right; margin-right: 8px; }
.menubar .mdi { width: 16px; padding: 0; height: 16px; }
.mdi svg { width: 10px; height: 10px; fill: none; stroke: #000; stroke-width: 2; }
.grip { width: 2px; height: 16px; flex: none; background: repeating-linear-gradient(#a4a9b8 0 2px, transparent 2px 4px); }

.toolrow { display: flex; height: 25px; margin-bottom: 2px; background: linear-gradient(90deg, #eceffa, #f6f7fa); }
.toolbar { display: flex; align-items: center; margin-left: 2px; padding-bottom: 1px; background: linear-gradient(#fdfdfe, #e3e6ee 50%, #c3c8d9); }
.toolbar .grip { margin: 0 3px; }
.toolbar button { display: flex; align-items: center; justify-content: center; width: 22px; height: 22px; }
.toolbar .drop { width: 29px; gap: 1px; padding-left: 2px; }
.drop .tri { width: 5px; height: 3px; }
.off { color: #a0a6b4; }
.toolbar .on { background: #c3e0f2; border: 1px solid #3c8fc8; }
.sep { width: 1px; height: 14px; margin: 0 3px 0 2px; background: #9aa0b0; flex: none; }
.more { width: 12px; background: #c9ced9; display: flex; align-items: flex-end; justify-content: center; padding-bottom: 5px; }

.work { flex: 1; min-height: 0; display: grid; grid-template-columns: 250px minmax(0, 1fr) 199px; column-gap: 4px; }
.pane, .center { display: flex; flex-direction: column; min-height: 0; min-width: 0; position: relative; }
.pane { background: #fff; }
.cap { display: flex; align-items: center; justify-content: space-between; height: 18px; margin: 0 2px 0 0; padding: 0 0 0 3px; background: #bfcddb; }
.cap span { display: flex; gap: 1px; }
.cap button { width: 12px; height: 13px; background: #f0f0f0; box-shadow: 1px 1px #555; }
.cap svg { width: 12px; height: 12px; display: block; }
.tree { flex: 1; padding-top: 2px; }
.tree li { display: flex; height: 16px; align-items: center; }
.tree li > i { width: 19px; }
.tree .tl { width: 19px; height: 16px; }
.tree .ic { margin: 0 5px 0 3px; }
.tree .root .ic { margin-left: 2px; }

.tabs { display: flex; align-items: flex-start; height: 24px; border-top: 2px solid #7c7c7c; background: #f0f0f0; font: 12px/16px var(--ui); }
.tabs button { display: flex; align-items: center; gap: 2px; height: 20px; margin-right: 1px; padding: 0 1px; border: solid #696969; border-width: 0 2px 2px 1px; }
.tabs .active { height: 24px; margin: -2px 0 0; padding: 0 5px; background: #f0f0f0; border-left-color: #fff; }

.viewport { flex: 1; min-height: 0; margin-left: 2px; position: relative; background: #fff; border: 2px solid #696969; border-bottom: 0; }
.center .tabs { padding-left: 3px; }
.dims { position: absolute; left: 5px; top: 5px; font: 11px/16px Roboto, sans-serif; color: #000080; }
.scene { position: absolute; inset: 0; width: 100%; height: 100%; }
.axis { font: 12px "Liberation Sans", sans-serif; }
.navcube { position: absolute; right: 20px; top: 18px; width: 114px; height: 114px; font-family: "Liberation Sans", sans-serif; font-weight: bold; }

.dialog { position: absolute; left: 40px; top: 76px; width: 421px; padding-bottom: 8px; background: #f0f0f0; border: 1px solid #6e6e6e; box-shadow: 2px 3px 6px #0002; }
.dtitle { display: flex; align-items: center; justify-content: space-between; height: 30px; padding: 0 8px; background: #fff; font: 12px/16px var(--ui); }
.dtitle button { width: 14px; height: 16px; }
.dtitle svg { width: 12px; height: 12px; stroke: #000; fill: none; }
.dtabs { display: flex; align-items: flex-end; padding: 7px 0 0 8px; }
.dtabs button { height: 18px; width: 48px; border: 1px solid #d9d9d9; border-bottom: 0; }
.dtabs .cur { height: 21px; width: 46px; margin-bottom: -1px; padding: 0 12px 2px 0; background: #fff; position: relative; }
.page { margin: 0 8px 0 6px; padding: 9px 10px 8px 8px; background: #fff; border: 1px solid #d9d9d9; }
.group { margin: 0 0 9px; padding: 0; min-width: 0; border: 1px solid #bcc2d6; }
.gh { display: block; height: 15px; padding-left: 4px; line-height: 15px; color: #4a5568; background: linear-gradient(#f6f7fb, #cdd3e2); border-bottom: 1px solid #bcc2d6; }
.steprow { display: flex; align-items: flex-start; gap: 6px; padding: 8px 8px 4px 8px; }
.steprow .sel { flex: 1; margin-top: 1px; }
.steprow button { width: 25px; height: 19px; border: 1px solid #adadad; background: #e1e1e1; }
.sel { display: block; position: relative; }
.sel select { display: block; width: 100%; height: 21px; padding: 1px 3px 0; appearance: none; border: 1px solid #adadad; border-radius: 0; background: #e1e1e1; }
.sel svg { position: absolute; right: 3px; top: 5px; width: 11px; height: 11px; pointer-events: none; }
.info { display: flex; height: 250px; margin: 7px 8px 6px 6px; padding: 1px; border: 1px solid #828790; background: #fff; }
.lines { flex: 1; padding: 2px 0 0 27px; line-height: 13px; overflow: hidden; }
.lines h4 { margin-left: -12px; }
.sbar { display: flex; flex-direction: column; width: 16px; margin-right: 1px; background: #f0f0f0; }
.sbar svg { height: 17px; width: 15px; fill: none; stroke: #505050; stroke-width: 2; }
.sbar i { height: 95px; margin: auto 0 12px; background: #cdcdcd; }
.update, .dbtns button { height: 22px; background: #e1e1e1; border: 1px solid #adadad; }
.update { width: 99px; border: 2px solid #0078d7; display: block; }
.dbtns { display: flex; justify-content: flex-end; gap: 8px; padding: 8px 7px 0 0; }
.dbtns button { width: 73px; }
.dialog button:disabled { background: #ccc; border-color: #bfbfbf; color: #838383; }

.mark { position: absolute; border: 3px solid #ff4444; pointer-events: none; }
.mark-info { left: 73px; top: 400px; width: 309px; height: 76px; }
.mark-tab { left: 61px; bottom: -6px; width: 83px; height: 46px; box-shadow: 2px 3px 4px #0006, inset 2px 3px 4px #0004; }
.arrow { position: absolute; left: -14px; top: 424px; width: 90px; height: 60px; }

.right .cap { margin: 0 0 0 2px; padding: 0 1px 0 2px; }
.stack { flex: 1; display: flex; flex-direction: column; gap: 2px; padding: 3px 1px 0 2px; }
.box { border: 1px solid #cbcee4; background: #fafaff; }
.box h3 { display: flex; align-items: center; justify-content: space-between; height: 18px; padding: 0 5px 0 3px; color: #4a5568; background: linear-gradient(#f2f3f9, #cdd3e2); }
.box h3 .tri { color: #7a7f8c; }
.box a, .box label { display: flex; align-items: center; gap: 5px; height: 19px; padding: 2px 5px 0 3px; color: #000; text-decoration: none; }
.box .cur { font-weight: bold; }
.here { width: 5px; height: 8px; margin-left: auto; fill: #101080; }
.box input { appearance: none; display: grid; place-items: center; width: 14px; height: 14px; margin: 0 1px; border: 1px solid #3f63bc; background: #f3f3f3; }
.box input:checked::after { content: ""; width: 8px; height: 4px; border: solid #188018; border-width: 0 0 2px 2px; transform: rotate(-45deg); margin-bottom: 3px; }
.swatch { width: 16px; height: 16px; margin-right: 3px; border: 1px solid #3f63bc; background: #a8c8f0; }
.probe { height: 76px; background: #f0f0f0; }
.pbody { padding: 7px 8px 0 6px; }
.pbtns { display: flex; gap: 3px; padding: 2px 0 0 1px; }
.pbtns button { display: flex; align-items: center; justify-content: center; width: 21px; height: 19px; margin-right: 1px; border: 1px solid #adadad; background: #e1e1e1; }
.box.help { background: #ffffe1; }

.status { display: flex; height: 21px; padding-left: 3px; border-top: 1px solid #d8d8d8; font: 12px/21px var(--ui); }
.status i { margin-top: 1px; border-left: 1px solid #d4d4d4; }
.msg { flex: 1; }
.s1 { width: 9px; } .s2 { width: 82px; } .s3 { width: 57px; } .s4 { width: 72px; } .s5 { width: 65px; }
```
